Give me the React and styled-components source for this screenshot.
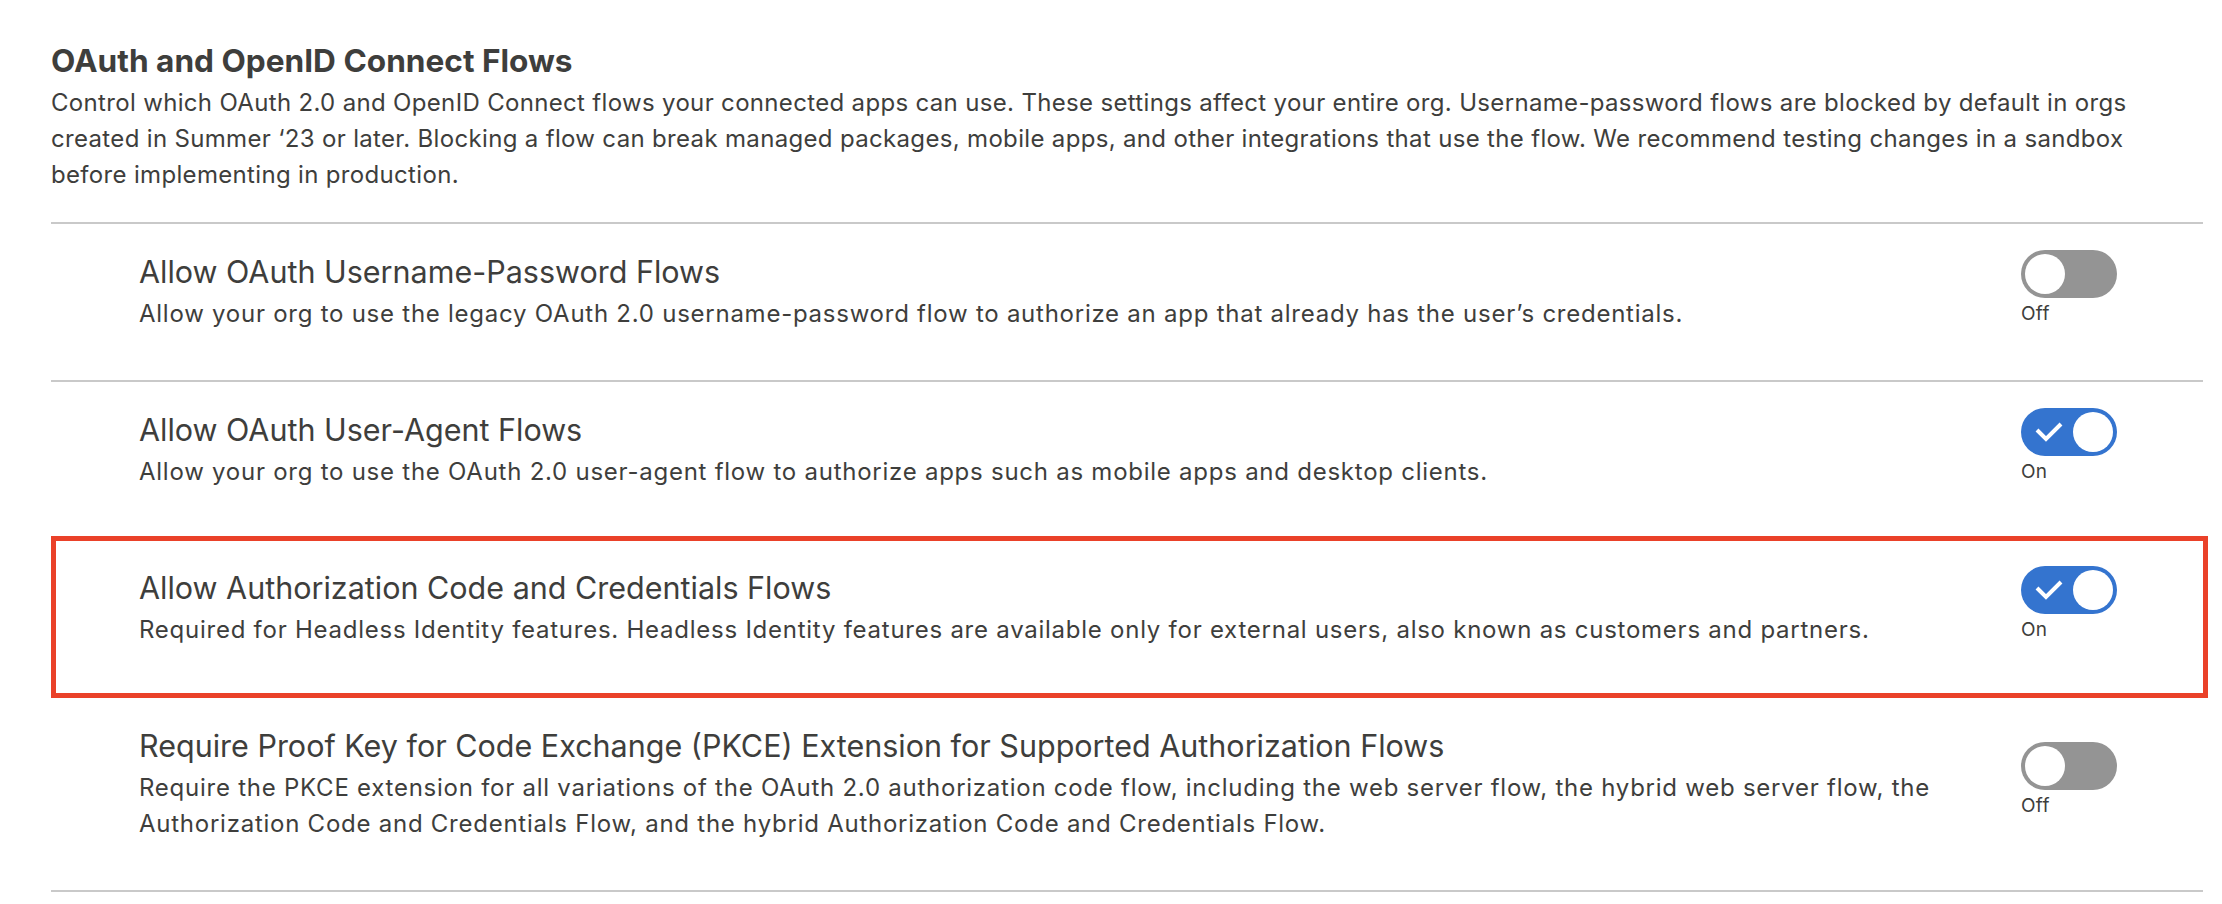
import React from "react";
import styled, { createGlobalStyle, css } from "styled-components";

const GlobalStyle = createGlobalStyle`
  body {
    margin: 0;
    background: #ffffff;
    font-family: Inter, "Liberation Sans", Arial, sans-serif;
    color: #3e3e3c;
  }
`;

const Page = styled.div`
  margin: 0 19px 0 51px;
  padding-top: 43px;
`;

const Header = styled.header`
  padding-bottom: 29px;
`;

const Heading = styled.h2`
  margin: 0 0 6px;
  font-size: 31.6px;
  line-height: 36px;
  font-weight: 700;
  color: #3e3e3c;
`;

const Intro = styled.p`
  margin: 0;
  font-size: 24px;
  line-height: 36px;
  letter-spacing: 0.33px;
  white-space: nowrap;
`;

const List = styled.ul`
  list-style: none;
  margin: 0;
  padding: 0;
  border-bottom: 2px solid #c9c9c9;
`;

const Row = styled.li`
  position: relative;
  display: flex;
  align-items: center;
  border-top: 2px solid #c9c9c9;
  padding: 24px 86px 48px 88px;

  ${(p) =>
    p.$highlight &&
    css`
      &::after {
        content: "";
        position: absolute;
        top: -4px;
        bottom: -2px;
        left: 0;
        right: -5px;
        border: 5px solid #ea4129;
        z-index: 1;
        pointer-events: none;
      }
    `}
`;

const Text = styled.div`
  flex: 1;
`;

const RowTitle = styled.h3`
  margin: 0;
  font-size: 30.5px;
  line-height: 48px;
  font-weight: 400;
  color: #3e3e3c;
`;

const RowDesc = styled.p`
  margin: 0;
  font-size: 24px;
  line-height: 36px;
  letter-spacing: 0.75px;
  white-space: nowrap;
`;

const ToggleBox = styled.div`
  display: flex;
  flex-direction: column;
  align-items: flex-start;
  width: 96px;
`;

const Track = styled.span`
  display: flex;
  align-items: center;
  justify-content: ${(p) => (p.$on ? "space-between" : "flex-start")};
  box-sizing: border-box;
  width: 96px;
  height: 48px;
  padding: 0 4px;
  border-radius: 24px;
  background: ${(p) => (p.$on ? "#3474cf" : "#949494")};
`;

const Knob = styled.span`
  width: 40px;
  height: 40px;
  border-radius: 50%;
  background: #ffffff;
`;

const Check = styled.svg`
  margin-left: 10px;
`;

const State = styled.span`
  font-size: 19px;
  line-height: 32px;
  letter-spacing: 0.3px;
  color: #3e3e3c;
`;

const Toggle = ({ on }) => (
  <ToggleBox>
    <Track $on={on}>
      {on && (
        <Check width="28" height="20" viewBox="0 0 28 20">
          <polyline
            points="2,8 11,17 26,2"
            fill="none"
            stroke="#ffffff"
            strokeWidth="4"
          />
        </Check>
      )}
      <Knob />
    </Track>
    <State>{on ? "On" : "Off"}</State>
  </ToggleBox>
);

const flows = [
  {
    title: "Allow OAuth Username-Password Flows",
    lines: [
      "Allow your org to use the legacy OAuth 2.0 username-password flow to authorize an app that already has the user\u2019s credentials.",
    ],
    on: false,
  },
  {
    title: "Allow OAuth User-Agent Flows",
    lines: [
      "Allow your org to use the OAuth 2.0 user-agent flow to authorize apps such as mobile apps and desktop clients.",
    ],
    on: true,
  },
  {
    title: "Allow Authorization Code and Credentials Flows",
    lines: [
      "Required for Headless Identity features. Headless Identity features are available only for external users, also known as customers and partners.",
    ],
    on: true,
    highlight: true,
  },
  {
    title:
      "Require Proof Key for Code Exchange (PKCE) Extension for Supported Authorization Flows",
    lines: [
      "Require the PKCE extension for all variations of the OAuth 2.0 authorization code flow, including the web server flow, the hybrid web server flow, the",
      "Authorization Code and Credentials Flow, and the hybrid Authorization Code and Credentials Flow.",
    ],
    on: false,
  },
];

const introLines = [
  "Control which OAuth 2.0 and OpenID Connect flows your connected apps can use. These settings affect your entire org. Username-password flows are blocked by default in orgs",
  "created in Summer \u201823 or later. Blocking a flow can break managed packages, mobile apps, and other integrations that use the flow. We recommend testing changes in a sandbox",
  "before implementing in production.",
];

const withBreaks = (lines) =>
  lines.map((line, i) => (
    <React.Fragment key={i}>
      {i > 0 && <br />}
      {line}
    </React.Fragment>
  ));

export default function App() {
  return (
    <>
      <GlobalStyle />
      <Page>
        <Header>
          <Heading>OAuth and OpenID Connect Flows</Heading>
          <Intro>{withBreaks(introLines)}</Intro>
        </Header>
        <List>
          {flows.map((f) => (
            <Row key={f.title} $highlight={f.highlight}>
              <Text>
                <RowTitle>{f.title}</RowTitle>
                <RowDesc>{withBreaks(f.lines)}</RowDesc>
              </Text>
              <Toggle on={f.on} />
            </Row>
          ))}
        </List>
      </Page>
    </>
  );
}
